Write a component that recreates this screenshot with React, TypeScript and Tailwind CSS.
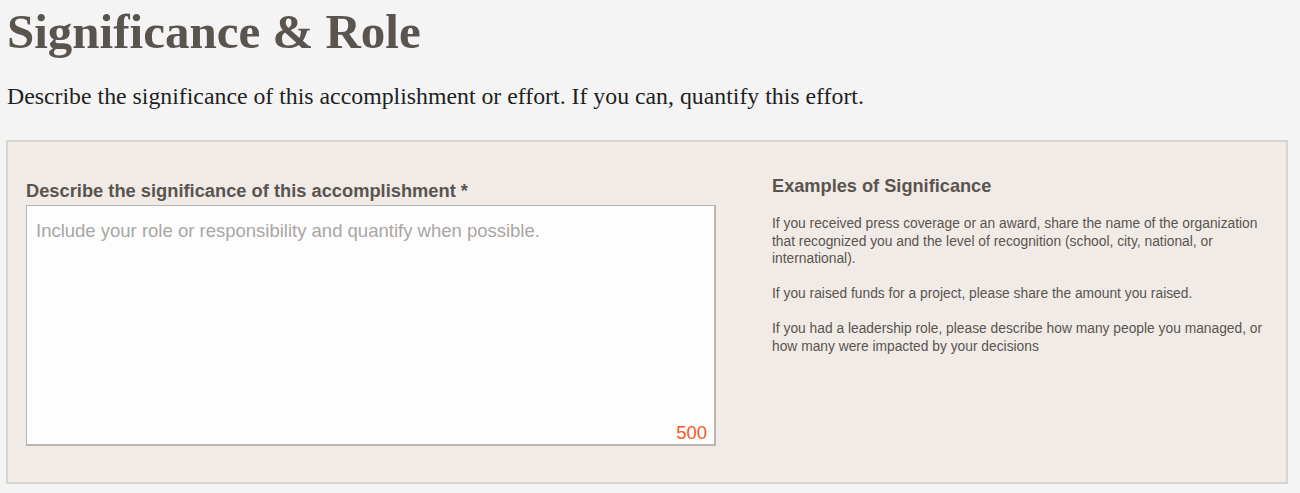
import React from "react";

export default function App() {
  const sans = { fontFamily: '"Liberation Sans", Arial, sans-serif' } as React.CSSProperties;
  const serif = { fontFamily: '"Liberation Serif", "Times New Roman", serif' } as React.CSSProperties;
  return (
    <div className="min-h-[493px] w-[1300px] bg-[#f4f4f4] pl-[6px] pr-[12px] pt-[5px]">
      <h1 style={serif} className="m-0 pl-[1px] text-[49px] font-bold leading-[54px] text-[#5a544f]">
        Significance &amp; Role
      </h1>
      <p style={serif} className="mt-[23px] pl-[1px] text-[23.8px] leading-[28px] text-[#1f1f1f]">
        Describe the significance of this accomplishment or effort. If you can, quantify this effort.
      </p>
      <div className="mt-[30px] flex h-[344px] border-2 border-[#d8d4d0] bg-[#f0ebe7] pl-[18px] pt-[38px]">
        <div className="w-[690px] shrink-0">
          <div style={sans} className="text-[18.3px] font-bold leading-[22px] text-[#5a544f]">
            Describe the significance of this accomplishment *
          </div>
          <div className="relative mt-[3px] h-[241px] w-[690px] border border-[#b9b5b1] border-r-2 border-b-2 bg-[#fdfdfd]">
            <div style={sans} className="pl-[9px] pt-[14px] text-[18.5px] leading-[22px] text-[#a9a6a3]">
              Include your role or responsibility and quantify when possible.
            </div>
            <div style={sans} className="absolute bottom-[0px] right-[7px] text-[18.5px] leading-[22px] text-[#f25a22]">
              500
            </div>
          </div>
        </div>
        <div className="ml-[56px] -mt-[5px] w-[500px]">
          <div style={sans} className="text-[18.2px] font-bold leading-[22px] text-[#5a544f]">
            Examples of Significance
          </div>
          <div style={sans} className="mt-[18px] w-[500px] text-[13.8px] leading-[17.5px] text-[#5a544f]">
            <p>
              If you received press coverage or an award, share the name of the organization that recognized you and the level of recognition (school, city, national, or international).
            </p>
            <p className="mt-[17.5px]">If you raised funds for a project, please share the amount you raised.</p>
            <p className="mt-[17.5px]">
              If you had a leadership role, please describe how many people you managed, or how many were impacted by your decisions
            </p>
          </div>
        </div>
      </div>
    </div>
  );
}
